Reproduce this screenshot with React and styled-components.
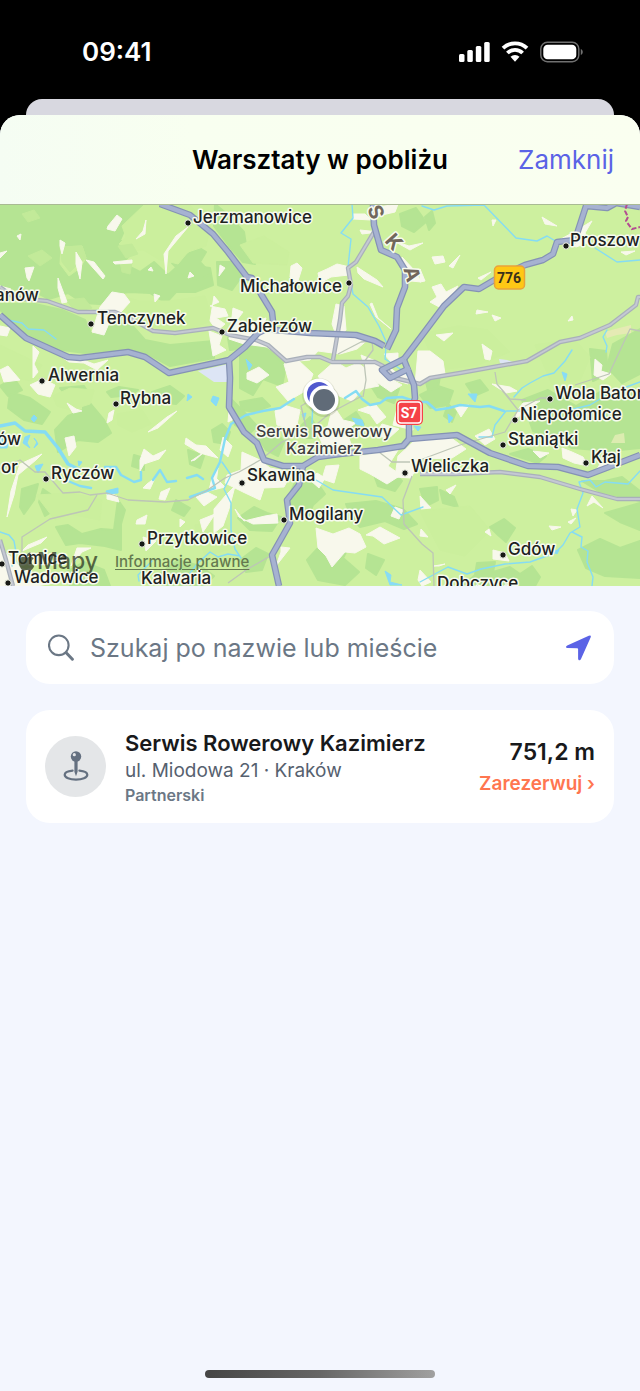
import React from "react";
import styled, { createGlobalStyle } from "styled-components";
import { FaApple } from "react-icons/fa";

const GlobalStyle = createGlobalStyle`
  *, *::before, *::after { box-sizing: border-box; }
  body {
    margin: 0;
    background: #000;
    font-family: Inter, "Liberation Sans", sans-serif;
  }
  button, input { font: inherit; }
`;

const Screen = styled.div`
  display: flex;
  flex-direction: column;
  min-height: 100vh;
  background: #000;
`;

const StatusBar = styled.header`
  display: flex;
  align-items: center;
  justify-content: space-between;
  height: 99px;
  padding: 5px 57px 0 82px;
  color: #fff;
`;

const Clock = styled.time`
  font-size: 26px;
  line-height: 32px;
  font-weight: 600;
`;

const SheetBehind = styled.div`
  height: 16px;
  margin: 0 26px;
  border-radius: 16px 16px 0 0;
  background: #d8d8e0;
`;

const Sheet = styled.main`
  flex: 1;
  display: flex;
  flex-direction: column;
  overflow: hidden;
  border-radius: 20px 20px 0 0;
  background: #f3f6fe;
`;

const SheetHeader = styled.div`
  display: grid;
  grid-template-columns: 1fr auto 1fr;
  align-items: center;
  height: 89px;
  padding: 0 26px;
  background: linear-gradient(90deg, #f5fdf3, #f8fff0 30%, #fafff0);
`;

const Title = styled.h1`
  grid-column: 2;
  margin: 0;
  font-size: 26px;
  line-height: 32px;
  font-weight: 600;
  color: #000;
`;

const CloseButton = styled.button`
  justify-self: end;
  padding: 0;
  border: 0;
  background: none;
  font-size: 26px;
  line-height: 32px;
  color: #5b63e6;
`;

const MapPanel = styled.section`
  position: relative;
  height: 382px;
  overflow: hidden;
  border-top: 1px solid #a9bb93;
  background: #cdf09f;
`;

const MapCanvas = styled.svg`
  display: block;
  width: 100%;
  height: 100%;
`;

const MapBrand = styled.div`
  position: absolute;
  left: 16px;
  bottom: 10px;
  display: flex;
  align-items: center;
  font-size: 23px;
  line-height: 30px;
  font-weight: 500;
  color: rgba(45, 55, 35, 0.75);
`;

const LegalLink = styled.a`
  position: absolute;
  left: 115px;
  bottom: 14px;
  font-size: 15px;
  line-height: 20px;
  font-weight: 500;
  color: #64794f;
  text-decoration: underline;
  text-underline-offset: 2px;
`;

const Content = styled.div`
  display: flex;
  flex-direction: column;
  gap: 26px;
  padding: 25px 26px;
`;

const SearchBox = styled.form`
  display: flex;
  align-items: center;
  gap: 16px;
  height: 73px;
  padding: 0 22px;
  border-radius: 24px;
  background: #fff;
`;

const SearchInput = styled.input`
  flex: 1;
  min-width: 0;
  padding: 0;
  border: 0;
  outline: 0;
  background: none;
  font-size: 25px;
  line-height: 32px;
  color: #1c1c1e;
  &::placeholder { color: #6b7785; opacity: 1; }
`;

const IconButton = styled.button`
  display: flex;
  padding: 0;
  border: 0;
  background: none;
`;

const WorkshopCard = styled.article`
  display: flex;
  align-items: center;
  gap: 19px;
  height: 113px;
  padding: 0 19px;
  border-radius: 24px;
  background: #fff;
`;

const Avatar = styled.div`
  display: flex;
  align-items: center;
  justify-content: center;
  flex: none;
  width: 61px;
  height: 61px;
  border-radius: 50%;
  background: #e4e6e8;
`;

const Details = styled.div`
  flex: 1;
  min-width: 0;
`;

const Name = styled.h2`
  margin: 0;
  font-size: 22px;
  line-height: 30px;
  font-weight: 600;
  color: #18191b;
`;

const Address = styled.p`
  margin: 0;
  font-size: 19px;
  line-height: 26px;
  color: #56616f;
`;

const Tag = styled.p`
  margin: 0;
  font-size: 16px;
  line-height: 22px;
  font-weight: 600;
  color: #6b7785;
`;

const Aside = styled.div`
  display: flex;
  flex-direction: column;
  align-items: flex-end;
  gap: 4px;
`;

const Distance = styled.span`
  font-size: 23px;
  line-height: 30px;
  font-weight: 600;
  color: #18191b;
`;

const BookButton = styled.button`
  padding: 0;
  border: 0;
  background: none;
  font-size: 19px;
  line-height: 26px;
  font-weight: 600;
  color: #ff7650;
`;

const HomeIndicator = styled.div`
  width: 36%;
  height: 8px;
  margin: auto auto 13px;
  border-radius: 4px;
  background: linear-gradient(90deg, #454545, #666 50%, #a0a0a0);
`;

const StatusIcons = () => (
  <svg width="125" height="22" viewBox="0 0 125 22" aria-label="Zasięg, Wi-Fi, bateria" role="img">
    <g fill="#fff">
      <rect x="1" y="13" width="5.5" height="8" rx="1.5" />
      <rect x="9.3" y="9" width="5.5" height="12" rx="1.5" />
      <rect x="17.8" y="5" width="5.5" height="16" rx="1.5" />
      <rect x="26.2" y="1" width="5.5" height="20" rx="1.5" />
    </g>
    <g fill="none" stroke="#fff" strokeWidth="3.8">
      <path d="M45 7.2a17.2 17.2 0 0 1 24 0" />
      <path d="M49.4 12a10.7 10.7 0 0 1 15.2 0" />
    </g>
    <path d="M52.5 15.8a6.4 6.4 0 0 1 9 0L57 20.8z" fill="#fff" />
    <rect x="82.8" y="1.3" width="38" height="19.4" rx="6.5" fill="none" stroke="#707070" strokeWidth="1.4" />
    <rect x="85.3" y="3.7" width="33" height="14.6" rx="4.3" fill="#fff" />
    <path d="M122.8 8c2.6 1 2.6 5 0 6z" fill="#707070" />
  </svg>
);

const woods = [
  "0,204 160,204 147,218 128,222 120,240 133,252 122,263 140,272 154,262 168,275 180,264 210,268 213,285 195,292 176,292 166,303 150,293 130,292 112,294 100,304 83,303 68,293 49,299 30,289 0,289",
  "172,263 184,257 198,247 206,252 200,262 211,274 200,280 184,275",
  "0,304 35,304 62,310 85,320 92,335 105,327 130,323 145,340 170,345 214,341 214,358 170,366 148,354 130,349 85,353 55,349 28,334 0,310",
  "215,204 227,214 244,232 247,252 255,264 243,262 229,246 214,226",
  "217,262 232,262 242,276 232,290 218,285",
  "240,352 253,342 272,352 286,366 282,386 263,379 253,395 240,388",
  "228,338 251,335 246,348 230,350",
  "55,430 68,416 83,410 83,394 94,408 104,420 111,433 98,442 78,440 58,452",
  "107,392 119,387 138,390 131,395 111,397",
  "10,392 30,398 50,412 42,424 24,420 8,408",
  "0,386 14,378 22,390 8,396",
  "60,388 84,386 90,396 74,404",
  "152,392 170,386 184,396 176,404 160,402",
  "22,489 38,484 34,500 24,514 20,507",
  "43,489 53,496 50,506 59,507 45,516 39,502",
  "118,500 125,510 121,524 121,550 105,546 80,543 66,545 56,527 68,525 82,534 101,529 114,530",
  "134,455 144,458 144,470 132,466",
  "188,450 204,456 200,468 190,464",
  "176,500 190,508 184,516 172,510",
  "160,574 178,560 200,566 214,576 204,586 164,586",
  "66,572 84,562 104,570 110,586 70,586",
  "229,397 246,414 257,426 249,434 235,425 230,412",
  "256,434 274,430 284,442 278,456 266,450",
  "240,402 262,398 270,406 254,412 242,410",
  "212,430 222,424 230,432 226,444 214,442",
  "238,518 254,507 267,513 281,517 272,531 250,530",
  "240,560 256,548 268,554 262,570 246,572",
  "299,474 317,482 325,494 313,505 308,518 294,513 287,500",
  "346,504 376,501 403,509 417,524 404,529 385,521 360,527 351,516",
  "318,548 332,540 347,550 343,558 359,572 345,585 318,580 307,560",
  "368,554 384,560 376,575 366,568",
  "463,586 475,575 477,563 495,562 493,572 510,567 520,574 532,566 540,577 535,586",
  "578,550 600,539 620,548 640,541 640,578 605,576 586,568",
  "490,527 504,519 515,528 506,542 498,535",
  "605,513 640,503 640,530 620,522",
  "613,344 640,329 640,374 622,383 607,367",
  "522,400 548,390 576,406 605,389 640,391 640,448 609,451 572,448 552,438 533,431",
  "590,349 606,351 608,374 593,381",
  "420,395 438,386 453,391 448,405 430,408",
  "426,382 440,376 438,388 428,390",
  "510,454 528,449 546,456 538,463",
  "582,481 605,481 622,477 640,491 640,501 600,492",
  "440,490 454,497 458,507 443,503",
  "448,404 456,412 452,422 444,416",
  "374,475 392,471 402,481 395,491 378,486",
  "420,489 437,487 438,500 426,506",
  "425,217 432,211 435,223 429,230",
  "400,214 416,208 426,222 414,232 402,226",
  "371,386 386,379 399,389 394,403 378,397",
  "301,426 310,417 317,427 314,438 303,438",
  "466,384 480,380 488,390 474,396",
  "344,420 356,412 364,424 352,430",
];

const meadows = [
  "122,226 145,204 189,204 211,226 206,246 188,252 178,264 158,259 143,250 132,251 119,244 126,237",
  "61,247 82,246 86,258 80,268 69,276 60,264",
  "115,294 139,301 170,301 205,296 212,321 185,330 153,328 125,309",
  "0,345 42,365 31,381 0,375",
  "53,396 70,388 94,390 90,404 71,410 57,406",
  "117,414 142,410 151,424 132,432 118,425",
  "36,495 70,493 102,500 100,520 70,514 55,520",
  "422,334 458,326 488,330 510,352 478,365 438,370",
  "535,345 574,339 590,357 580,380 552,384",
  "420,511 470,506 490,530 465,556 440,550",
  "195,525 225,520 233,548 205,556",
  "240,245 264,236 289,252 287,265 253,263",
];

const glades = [
  "60,247 82,246 86,258 78,264 70,272 62,262",
  "118,246 132,244 138,254 126,258",
  "120,262 132,262 130,274 122,272",
  "28,256 42,250 52,258 40,266",
  "66,300 84,298 92,308 76,312",
  "22,214 34,210 40,218 28,222",
];

const builtUp = [
  "112,292 124,294 130,302 121,312 110,321 104,335 92,332 100,307",
  "108,226 117,215 122,219 115,231 107,229",
  "76,252 82,262 80,279 76,264", "60,240 65,243 62,254 60,246",
  "25,268 34,267 29,281 27,278", "0,253 7,251 0,258", "17,236 21,234 20,240",
  "94,262 105,276 103,279 86,260", "58,278 67,302 62,303 58,288",
  "113,262 132,260 132,263 115,264", "146,220 145,234 136,239 143,231",
  "188,227 168,251 166,274 164,254 176,236", "151,267 153,271 148,270",
  "190,272 194,276 188,278", "154,294 160,296 155,302",
  "220,265 225,268 219,276", "0,286 11,289 5,296 0,296",
  "0,326 10,328 7,336 0,335", "56,353 75,357 94,364 108,360 97,370 84,363 69,362",
  "33,346 39,352 34,364 38,372 33,378", "0,370 8,366 20,380 4,382",
  "30,385 43,379 55,385 50,397 38,394",
  "65,438 74,436 76,447 69,456 67,447", "20,464 42,454 36,460 18,475 14,495 7,517 11,491",
  "144,449 153,456 166,450 159,459 144,464 140,471 140,460",
  "186,438 196,445 206,446 218,458 200,453 185,444",
  "191,461 203,453 195,460", "109,413 114,410 112,420 107,423",
  "167,417 177,411 158,428 148,432", "67,403 76,409 82,411 73,413",
  "147,484 155,478 150,489 143,488", "161,492 170,488 165,500 159,499",
  "196,497 207,492 217,497 204,506", "218,468 216,483 209,491 212,478",
  "107,492 117,496 119,502 107,499", "137,520 147,515 145,524 136,524",
  "180,519 185,522 180,527", "200,520 215,514 203,532", "143,537 156,541 146,551",
  "28,545 47,537 41,543 22,551", "77,548 91,548 82,552 71,566",
  "0,548 12,558 22,569 38,574 60,582 36,586 0,586",
  "214,296 219,302 210,306 225,309 228,316 216,318 225,324 217,331 210,321",
  "209,331 222,336 219,345 226,350 213,356",
  "233,308 243,312 237,320 247,324 266,318 262,330 282,333 294,330 312,337 335,333 352,337 370,338 357,349 340,354 318,351 310,360 288,362 267,347 244,344 229,339 231,326",
  "247,373 259,367 269,375 257,383 247,379",
  "284,364 297,359 313,374 307,390 288,401 276,387 289,382",
  "318,376 335,361 346,368 358,363 370,372 379,386 363,389 352,401 334,394 325,386",
  "361,355 378,362 389,378 402,385 391,392 378,383 367,374",
  "284,405 300,410 296,430 277,425 275,411",
  "333,405 343,420 356,423 346,430 351,444 324,448 318,434 328,426",
  "358,410 375,404 386,417 377,424 370,414", "382,424 399,429 389,438 375,436",
  "398,404 410,414 413,430 393,425",
  "415,440 450,437 466,449 452,458 421,459 411,478 395,477 398,456",
  "360,456 398,450 388,466 401,475 387,484 370,474 360,469",
  "242,452 260,460 270,468 292,472 284,487 264,488 260,500 243,492 225,483 227,475 241,470",
  "326,466 339,465 334,483 322,479", "317,473 325,478 319,488 310,480",
  "229,410 236,418 228,422", "223,437 232,446 228,457 220,450",
  "214,509 226,495 235,486 229,509 223,526 214,533",
  "235,509 244,521 265,516 277,514 278,523 253,524 239,517",
  "316,528 333,534 349,528 360,534 366,547 355,553 345,552 332,567 326,556 318,548",
  "366,535 380,527 400,538 384,544 373,536", "281,547 290,548 276,566 281,552",
  "395,507 403,510 399,519 391,516", "213,475 225,487 209,491",
  "291,266 297,263 302,268 297,284 290,277",
  "327,269 337,264 350,267 349,275 331,277 320,283 318,273",
  "357,267 377,280 383,287 364,279 358,273", "372,303 378,318 391,329 376,317 370,304",
  "353,214 365,214 371,220 353,219", "371,208 398,204 395,212 382,215",
  "360,230 379,232 362,234", "402,257 415,271 421,282 411,281 403,270",
  "394,241 409,246 423,243 410,250", "384,354 398,353 398,360 391,362",
  "432,287 441,284 446,292 458,286 447,304 441,308 430,302 437,297",
  "456,259 460,255 453,268 449,266", "432,257 443,256 445,262 435,264",
  "491,272 481,280 478,278", "420,269 425,281 420,282",
  "436,335 453,333 444,341", "477,310 488,312 476,314", "492,315 501,318 495,321",
  "572,316 573,320 568,321", "542,217 557,226 545,224", "492,220 496,220 493,226",
  "482,344 492,351 490,360 485,359", "418,351 430,351 443,361 445,374 427,378 415,385",
  "595,359 602,365 601,371 611,374 603,380 594,375",
  "492,384 510,387 517,391 506,393", "523,403 540,401 525,411 514,421 518,410",
  "562,448 572,452 583,457 588,466 574,463 563,458",
  "603,459 621,466 606,468 594,474", "533,451 549,453 540,458",
  "455,407 469,405 461,417", "475,436 489,429 495,439 485,445",
  "587,506 592,496 603,508 594,502", "549,526 561,527 552,530",
  "571,509 577,510 573,516", "568,522 576,518 571,524", "446,490 456,485 450,494",
  "420,496 431,508 421,509", "485,532 489,529 491,536",
  "493,550 505,553 509,561 493,559", "421,529 428,537 420,536",
  "434,566 445,564 439,566", "420,570 431,582 422,586 418,580",
  "561,239 574,232 592,221 585,233 590,242 576,247", "621,252 635,251 626,255",
  "336,304 344,306 346,330 338,340 332,324", "388,366 398,374 410,372 408,384 394,380",
];

const lakes = [
  "34,415 37,418 34,422 31,419", "25,437 30,435 27,443 30,448 23,443",
  "34,438 38,444 34,448 37,442", "0,433 9,439 7,448 0,448", "35,466 43,464 38,473",
  "78,461 82,462 79,466", "188,394 192,397 187,401", "213,396 219,398 216,406 211,401",
  "246,359 252,365 249,370", "302,414 306,413 304,420",
  "468,394 477,394 475,402", "448,414 453,418 449,423", "562,372 567,374 565,381",
  "385,571 391,575 390,582 402,585 390,585", "414,426 421,427 418,431", "106,491 118,488 118,493 107,494",
  "553,551 559,550 557,554", "352,418 362,420 364,426 356,424",
];

const rivers = [
  { d: "M0 426L15 423 25 431 45 432 58 448 68 464 80 470", w: 3 },
  { d: "M105 467L116 467 121 475 134 482 141 480 141 472", w: 2 },
  { d: "M153 480L160 470 167 482 176 481M187 478L197 475 203 479M68 481L80 486 91 488M190 497L215 488 212 478 220 462 225 439 231 424 246 415 263 411 280 408 294 399", w: 2 },
  { d: "M345 398L356 391 362 399 370 405 380 403 387 398 402 397 417 402 427 402 436 410 449 408 460 405 480 407 489 406 504 411", w: 2 },
  { d: "M352 204L353 218 341 233 351 239 348 267 353 294 368 307 379 326 388 346", w: 1 },
  { d: "M386 347L385 359 405 372 411 380M8 320L22 323 28 329 44 330 56 339", w: 1 },
  { d: "M422 206L434 210 447 206 484 205 516 238 537 241 547 236 557 242M595 248L617 262 640 260", w: 1 },
  { d: "M572 350L565 361 554 373 543 376 530 383 522 388 514 397M607 330L603 337 607 346 606 352M640 382L610 393 590 405 565 411 525 411 506 411 495 425 492 437 479 437", w: 1 },
  { d: "M222 462L231 475 224 489 231 503 231 530 235 549 241 558M240 556L228 554 218 557 210 552 198 563 190 573", w: 1 },
  { d: "M316 480L333 490 382 497 401 515 423 507", w: 1 },
  { d: "M420 582L448 567 467 574 481 569 505 564 530 562 555 553 563 545 570 533 580 527 577 509 583 493 579 482 590 480 596 487 605 482 628 484 640 471M572 532L582 537 581 547 588 551 587 562 593 577 592 586", w: 1 },
  { d: "M0 532L9 535 14 541 16 552 12 566M139 581L138 575 152 561M313 400L312 423", w: 1 },
];

const lanes = [
  "0,469 20,460 35,472 45,472 63,493 80,492 90,495 107,493 128,500 165,502 188,500 206,491 225,478 239,472 262,459",
  "97,495 88,510 50,519 22,537 22,552",
  "338,354 361,342 372,341 373,350 364,362 366,380 363,397",
  "495,372 497,384 510,399 526,400", "575,385 609,374 630,329 640,331",
  "310,430 330,413 362,396", "262,459 282,442 307,431 301,406 318,396",
  "375,449 392,462 410,462", "412,476 403,500 404,524 422,544 433,553 434,586",
  "420,460 460,445 505,432 518,410 540,398 550,398", "502,390 518,410",
  "228,583 246,570 272,555",
];

const minorRoads = [
  "0,287 15,298 47,301 78,312 115,312 135,321 153,331 175,333 213,328 230,335 256,340 268,345 286,361 307,357 320,357 332,362 375,362 383,366 395,378 420,384 430,378 460,373 527,361 560,342 580,338 610,325 636,305 638,297 640,297",
  "333,360 340,320 342,303 348,296 351,285 348,268 356,262 374,232",
  "420,474 455,474 500,472 540,477 580,489 617,499 640,499",
  "0,540 6,560 13,586",
];

const mainRoads = [
  "160,204 190,215 213,234 228,252 247,277 252,278 261,294 272,312 274,330 310,333 356,335 375,341 384,346",
  "0,315 26,338 68,357 80,358 128,352 145,357 169,373 229,360 245,347 258,333 274,325",
  "229,360 230,378 229,407 244,432 257,443 264,460 283,466 303,466 318,457 340,454 378,450 403,446 409,439 457,435 490,453 528,466 558,467 588,475 640,455",
  "409,440 409,420 415,398 414,385 404,360",
  "373,204 374,225 381,250 397,257 405,270 405,287 397,308 396,330 387,349",
  "404,359 420,338 444,306 464,287 479,289 496,279 525,265 543,260 553,254 557,242 575,240 586,206 607,208 616,203 640,207",
  "404,359 382,370 390,378 410,368",
  "303,466 299,485 287,500 290,523 272,555 279,586",
];

const towns = [
  { name: "Jerzmanowice", x: 193, y: 223, dot: [188, 223] },
  { name: "Proszow", x: 570, y: 246, dot: [566, 246] },
  { name: "Michałowice", x: 240, y: 292, dot: [349, 283] },
  { name: "anów", x: -5, y: 301 },
  { name: "Tenczynek", x: 97, y: 324, dot: [91, 324] },
  { name: "Zabierzów", x: 227, y: 332, dot: [222, 332] },
  { name: "Alwernia", x: 48, y: 381, dot: [42, 381] },
  { name: "Rybna", x: 120, y: 404, dot: [116, 404] },
  { name: "Wola Bator", x: 555, y: 399, dot: [550, 399] },
  { name: "Niepołomice", x: 520, y: 420, dot: [515, 420] },
  { name: "Staniątki", x: 508, y: 445, dot: [503, 445] },
  { name: "ów", x: -3, y: 445 },
  { name: "Kłaj", x: 591, y: 463, dot: [586, 463] },
  { name: "Wieliczka", x: 411, y: 472, dot: [405, 473] },
  { name: "or", x: 1, y: 473 },
  { name: "Ryczów", x: 51, y: 479, dot: [46, 479] },
  { name: "Skawina", x: 247, y: 481, dot: [242, 483] },
  { name: "Mogilany", x: 289, y: 520, dot: [284, 520] },
  { name: "Przytkowice", x: 147, y: 544, dot: [142, 544] },
  { name: "Gdów", x: 508, y: 555, dot: [503, 555] },
  { name: "Tomice", x: 8, y: 564, dot: [2, 564] },
  { name: "Wadowice", x: 14, y: 583, dot: [8, 583] },
  { name: "Kalwaria", x: 141, y: 584 },
  { name: "Dobczyce", x: 437, y: 589 },
];

const TownName = styled.text`
  font-size: 17px;
  font-weight: 500;
  fill: #20221f;
  stroke: #f7fbee;
  stroke-width: 3px;
  stroke-linejoin: round;
  paint-order: stroke;
`;

const PlaceName = styled(TownName)`
  font-size: 16px;
  fill: #3d3d40;
  text-anchor: middle;
`;

const RegionLetter = styled(TownName)`
  font-size: 20px;
  font-weight: 700;
  fill: #71675b;
  text-anchor: middle;
`;

const RoadNumber = styled.text`
  font-family: Roboto, sans-serif;
  font-size: 14px;
  font-weight: 700;
  text-anchor: middle;
  fill: ${(p) => p.$color};
`;

const Roads = ({ lines, width, edge, fill }) => (
  <g fill="none" strokeLinejoin="round">
    {lines.map((points) => (
      <polyline key={points} points={points} stroke={edge} strokeWidth={width} />
    ))}
    {lines.map((points) => (
      <polyline key={points} points={points} stroke={fill} strokeWidth={width - 2.4} />
    ))}
  </g>
);

const Patches = ({ shapes, fill, outline }) => (
  <g fill={fill} stroke={fill} strokeWidth={outline} strokeLinejoin="round">
    {shapes.map((points) => (
      <polygon key={points} points={points} />
    ))}
  </g>
);

const WorkshopMap = () => (
  <MapCanvas viewBox="0 205 640 381" preserveAspectRatio="xMidYMid slice" role="img" aria-label="Mapa warsztatów">
    <rect y="204" width="640" height="382" fill="#cdf09f" />
    <Patches shapes={woods} fill="#b5e493" outline="2" />
    <Patches shapes={meadows} fill="#cbef9d" outline="1" />
    <Patches shapes={glades} fill="#c2ea99" outline="1" />
    <Patches shapes={builtUp} fill="#f8f8ec" outline="1" />
    <polygon points="198,371 228,364 227,382 214,382" fill="#dde5f5" />
    <polygon points="499,359 507,360 513,362 506,365 500,363" fill="#dde5f5" />
    <polygon points="605,332 615,329 631,325 631,333 617,335 607,338" fill="#e5eab4" />
    <polygon points="615,435 624,433 625,443 611,443" fill="#dcecb0" />
    <Patches shapes={lakes} fill="#87dcf6" outline="1" />
    <g fill="none" stroke="#85dcf4" strokeLinejoin="round" strokeLinecap="round">
      {rivers.map((river) => (
        <path key={river.d} d={river.d} strokeWidth={river.w + 0.4} />
      ))}
    </g>
    <g fill="none" stroke="#bdc5b7" strokeWidth="1.3" strokeLinejoin="round">
      {lanes.map((points) => (
        <polyline key={points} points={points} />
      ))}
    </g>
    <Roads lines={minorRoads} width={4.4} edge="#a9b0ba" fill="#c4c8d3" />
    <Roads lines={mainRoads} width={6.6} edge="#8592b5" fill="#a6b2d1" />
    <path d="M627 204L625 211 628 217 626 221 632 229 640 227" fill="none" stroke="#b34d91" strokeWidth="2" strokeDasharray="5 2" />

    <RegionLetter transform="translate(376 212) rotate(68)" y="7">S</RegionLetter>
    <RegionLetter transform="translate(394 242) rotate(48)" y="7">K</RegionLetter>
    <RegionLetter transform="translate(412 274) rotate(74)" y="7">A</RegionLetter>

    <rect x="494.5" y="266" width="30" height="23" rx="4" fill="#ffc815" stroke="#e9a23b" strokeWidth="1.5" />
    <RoadNumber x="509" y="283" $color="#3a301b">776</RoadNumber>
    <rect x="396" y="400" width="27" height="25" rx="5" fill="#f54247" />
    <rect x="398" y="402" width="23" height="21" rx="3" fill="none" stroke="#fff" strokeWidth="1.4" />
    <RoadNumber x="409" y="418" $color="#fff">S7</RoadNumber>

    {towns.map(({ name, x, y, dot }) => (
      <g key={name}>
        {dot && <circle cx={dot[0]} cy={dot[1]} r="3.2" fill="#171916" stroke="#f7fbee" strokeWidth="1" />}
        <TownName x={x} y={y}>{name}</TownName>
      </g>
    ))}

    <g>
      <circle cx="319" cy="395" r="17" fill="#637044" opacity="0.14" />
      <circle cx="324" cy="401" r="16" fill="#637044" opacity="0.2" />
      <circle cx="319" cy="394" r="15.5" fill="#fff" />
      <circle cx="319" cy="394" r="12" fill="#5058ce" />
      <circle cx="324" cy="400" r="14.5" fill="#fff" />
      <circle cx="324" cy="400" r="11" fill="#606b78" />
    </g>
    <PlaceName x="324" y="437">Serwis Rowerowy</PlaceName>
    <PlaceName x="324" y="454">Kazimierz</PlaceName>
  </MapCanvas>
);

const SearchIcon = () => (
  <svg width="26" height="28" viewBox="0 0 26 28" fill="none" stroke="#6b7785" strokeLinecap="round" aria-hidden="true">
    <circle cx="10.8" cy="11.3" r="9.8" strokeWidth="2.1" />
    <path d="M18.2 18.8L24.4 25.2" strokeWidth="3" />
  </svg>
);

const LocationIcon = () => (
  <svg width="26" height="26" viewBox="0 0 26 26" aria-hidden="true">
    <path
      d="M1.2 10.6L22.8 .7Q25.6 -.3 24.6 2.4L15 24Q14.2 25.7 12.9 25.2Q12.1 24.8 12.1 23.8V14.2Q12.1 13.2 11.2 13.2L1.4 13.1Q0 13 0 12Q0 11.2 1.2 10.6Z"
      fill="#5b63e6"
    />
  </svg>
);

const PinIcon = () => (
  <svg width="26" height="32" viewBox="0 0 26 32" aria-hidden="true">
    <path d="M9.6 19.6C4.5 20.1 1.7 21.8 1.7 23.8c0 3 5.1 4.8 11.3 4.8s11.3-1.8 11.3-4.8c0-2-2.8-3.7-7.9-4.2" fill="none" stroke="#647080" strokeWidth="2.2" strokeLinecap="round" />
    <path d="M11.4 9h3.2v11.8L13 25.2l-1.6-4.4z" fill="#647080" />
    <circle cx="13" cy="5.5" r="5.2" fill="#647080" />
    <circle cx="11.3" cy="3.7" r="1.6" fill="#e4e6e8" />
  </svg>
);

export default function App() {
  return (
    <Screen>
      <GlobalStyle />
      <StatusBar>
        <Clock>09:41</Clock>
        <StatusIcons />
      </StatusBar>
      <SheetBehind />
      <Sheet>
        <SheetHeader>
          <Title>Warsztaty w pobliżu</Title>
          <CloseButton type="button">Zamknij</CloseButton>
        </SheetHeader>
        <MapPanel>
          <WorkshopMap />
          <MapBrand>
            <FaApple size={21} aria-hidden="true" />
            Mapy
          </MapBrand>
          <LegalLink href="#informacje-prawne">Informacje prawne</LegalLink>
        </MapPanel>
        <Content>
          <SearchBox role="search">
            <SearchIcon />
            <SearchInput type="text" aria-label="Szukaj po nazwie lub mieście" placeholder="Szukaj po nazwie lub mieście" />
            <IconButton type="button" aria-label="Moja lokalizacja">
              <LocationIcon />
            </IconButton>
          </SearchBox>
          <WorkshopCard>
            <Avatar>
              <PinIcon />
            </Avatar>
            <Details>
              <Name>Serwis Rowerowy Kazimierz</Name>
              <Address>ul. Miodowa 21 · Kraków</Address>
              <Tag>Partnerski</Tag>
            </Details>
            <Aside>
              <Distance>751,2 m</Distance>
              <BookButton type="button">Zarezerwuj ›</BookButton>
            </Aside>
          </WorkshopCard>
        </Content>
        <HomeIndicator />
      </Sheet>
    </Screen>
  );
}
